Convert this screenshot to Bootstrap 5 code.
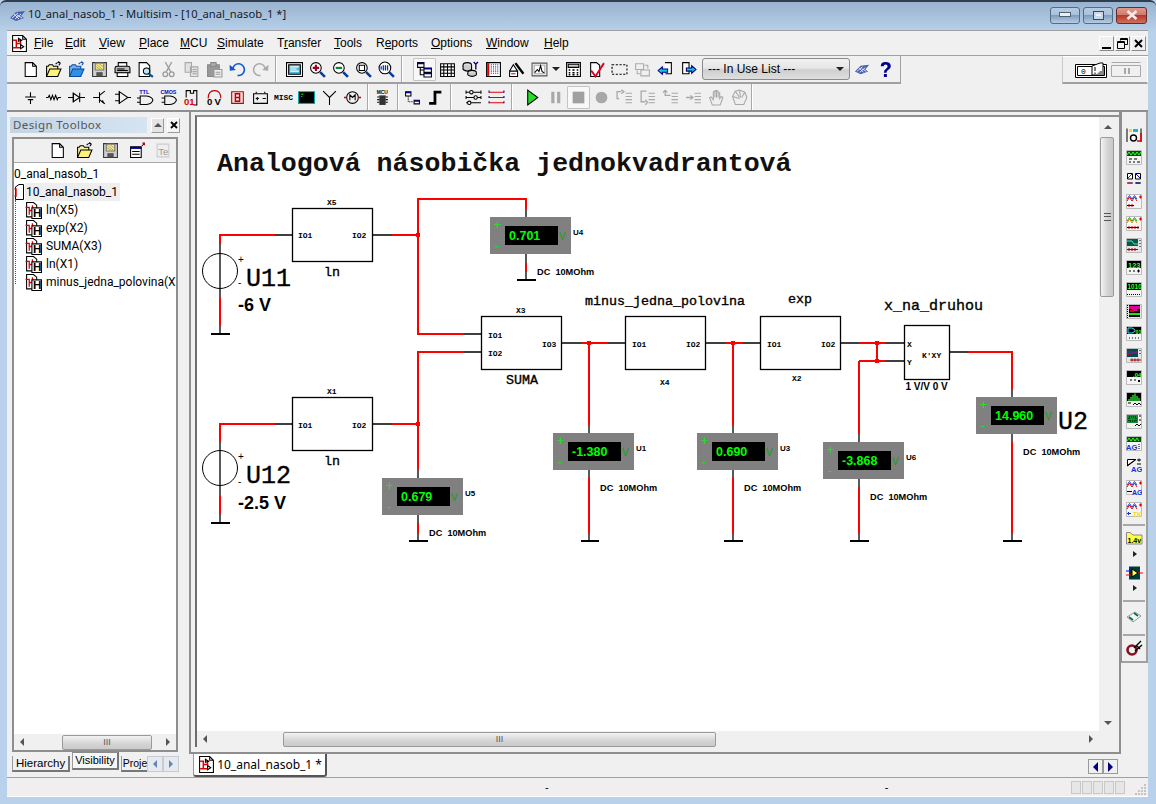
<!DOCTYPE html>
<html lang="en">
<head>
<meta charset="UTF-8">
<title>10_anal_nasob_1 - Multisim</title>
<link href="https://cdn.jsdelivr.net/npm/bootstrap@5.3.0/dist/css/bootstrap.min.css" rel="stylesheet">
<style>
  html, body { margin: 0; height: 804px; overflow: hidden; background: #b9d1ea; }
  body { font-family: "Liberation Sans", Arial, sans-serif; font-size: 12px; color: #000; line-height: 1; }
  .ms-win { width: 1156px; height: 804px; padding: 0 8px 7px 7px; border-top: 2px solid #2f3d4d; border-radius: 6px 6px 0 0; background: linear-gradient(#98b3d0 0, #b9d1ea 30px); }
  .ms-title { height: 28px; margin-left: -7px; margin-right: -8px; padding: 0 9px; }
  .ms-title-text { font-family: "Noto Sans", sans-serif; font-size: 11.2px; color: #15202c; margin-left: 1px; position: relative; top: -2px; }
  .ms-capbtn { width: 30px; height: 17px; margin-left: 3px; border: 1px solid #566a80; border-radius: 3px; background: linear-gradient(#b5cbe2 0, #a9c2dc 45%, #7f9dbd 50%, #b5cde5 100%); position: relative; top: -1px; }
  .ms-capbtn.cap-x { width: 31px; background: linear-gradient(#dd9a8c 0, #d07a6c 45%, #b8392a 50%, #d0705e 100%); border-color: #6b2a2a; color: #fff; }
  .ms-shell { height: 767px; background: #f0f0f0; border-top: 1px solid #a0a0a0; }
  .ms-menu { height: 24px; }
  .ms-menu-list { margin-left: 3px; }
  .ms-menu-item { padding: 0 3px; }
  .ms-menu-item u { text-underline-offset: 1px; }
  .mi-30 { width: 31px; } .mi-34 { width: 34px; } .mi-40 { width: 40px; } .mi-41 { width: 41px; } .mi-37 { width: 37px; }
  .mi-60 { width: 60px; } .mi-57 { width: 57px; } .mi-42 { width: 42px; } .mi-55 { width: 55px; } .mi-58 { width: 58px; }
  .ms-docbtns { margin-right: 2px; }
  .ms-docbtn { width: 15px; height: 15px; margin-left: 1px; background: #f0f0f0; border: 1px solid; border-color: #fff #8a8a8a #8a8a8a #fff; }
  .ms-rows { border-top: 1px solid #a0a0a0; }
  .ms-row1 { height: 28px; }
  .ms-row1-main { width: 894px; border-bottom: 2px solid #a0a0a0; border-right: 1px solid #a0a0a0; padding-left: 12px; }
  .ms-row1-side { width: 86px; margin-left: auto; padding-left: 5px; border: 1px solid #fff; border-bottom: 2px solid #a0a0a0; border-left-color: #c8c8c8; }
  .ms-row2 { height: 28px; padding-left: 12px; border-bottom: 2px solid #8f8f8f; }
  .ms-row2-end { width: 735px; }
  .ms-tb { width: 23px; height: 23px; flex: none; }
  .ms-tb.tb-on { background: #f8f8f8; border: 1px solid #c4c4c4; border-radius: 1px; }
  .ms-tb svg { width: 17px; height: 17px; }
  .ms-tb svg.tb-wide { width: 20px; }
  .ms-tb.tb-s { width: 15px; margin-left: -3px; }
  .tb-back1 { margin-left: -1px; }
  .tb-gap6 { margin-left: 6px; }
  .tb-misc { font: 700 8px "Liberation Mono", monospace; }
  .ms-sep { width: 1px; align-self: stretch; background: #a8a8a8; box-shadow: 1px 0 0 #fff; margin: 0 3px; flex: none; }
  .ms-combo { width: 148px; height: 22px; border: 1px solid #8a8a8a; border-radius: 3px; background: linear-gradient(#f2f2f2 0, #e6e6e6 45%, #cfcfcf 55%, #dedede 100%); margin: 0 1px 0 2px; padding: 0 5px; font-size: 12px; }
  .ms-arrow-d { width: 0; height: 0; border: 4px solid transparent; border-top: 4px solid #222; border-bottom: 0; }
  .ms-main { height: 665px; }
  .ms-left { width: 176px; padding-top: 4px; }
  .ms-left-head { height: 18px; padding-left: 3px; color: #555; }
  .ms-left-title { width: 137px; height: 16px; background: linear-gradient(90deg, #c2d4e6, #d6e4f2); padding-left: 3px; letter-spacing: .4px; line-height: 16px; font-family: "Noto Sans", sans-serif; font-size: 11.5px; }
  .ms-smallbtn { width: 13px; height: 15px; margin-left: 4px; border: 1px solid; border-color: #fff #9a9a9a #9a9a9a #fff; background: #e4e4e4; }
  .ms-smallbtn.btn-light-x { margin-left: 3px; background: #f4f4f4; }
  .ms-left-box { width: 166px; height: 615px; margin: 3px 0 0 5px; border: 2px solid #8e8e8e; }
  .ms-left-tools { height: 24px; padding-left: 35px; gap: 9.5px; border-bottom: 1px solid #a8a8a8; }
  .ms-left-tools svg { width: 17px; height: 17px; }
  .ms-tree { flex: 1; background: #fff; overflow: hidden; padding-top: 2px; position: relative; font-family: Roboto, sans-serif; }
  .ms-tree-row { height: 18px; white-space: nowrap; font-size: 12px; }
  .ms-tree-sel { background: #eeeeee; padding: 0 2px 0 1px; height: 18px; }
  .ms-tree-doc { flex: none; }
  .ms-tree-child { padding-left: 11px; }
  .ms-tree-child svg { width: 17px; height: 17px; margin-right: 4px; flex: none; }
  .ms-tree-dots { position: absolute; left: 1px; top: 37px; width: 9px; height: 84px; border-left: 1px dotted #555; }
  .ms-hbar { height: 16px; background: #f0f0f0; flex: none; }
  .ms-hthumb { height: 15px; border: 1px solid #9a9a9a; border-radius: 2px; background: linear-gradient(#f2f2f2, #d4d4d4 60%, #cacaca); font-size: 9px; color: #555; }
  .ms-hthumb.th-left { width: 90px; margin-left: 32px; }
  .ms-hthumb.th-main { width: 433px; margin-left: 70px; }
  .ms-sarrow { width: 16px; height: 16px; flex: none; }
  .ms-sarrow.sa-end { margin-left: auto; margin-right: 20px; }
  .ms-tri-l { width: 0; height: 0; border: 4px solid transparent; border-right: 4px solid #555; border-left: 0; }
  .ms-tri-r { width: 0; height: 0; border: 4px solid transparent; border-left: 4px solid #555; border-right: 0; }
  .ms-tri-u { width: 0; height: 0; border: 4px solid transparent; border-bottom: 4px solid #555; border-top: 0; }
  .ms-tri-d { width: 0; height: 0; border: 4px solid transparent; border-top: 4px solid #555; border-bottom: 0; }
  .ms-ltabs { height: 24px; margin-left: 5px; position: relative; }
  .ms-ltab { height: 16px; margin-top: 4px; border: 1px solid #9a9a9a; border-top: 0; border-right: 2px solid #777; border-bottom: 2px solid #777; padding: 0 3px; line-height: 14px; overflow: hidden; font-size: 11.5px; white-space: nowrap; }
  .ms-ltab.tab-on { margin-top: 0; height: 18px; border-top: 1px solid #8a8a8a; line-height: 15px; background: #f6f6f6; margin-left: 2px; margin-right: 2px; padding: 0 2px; font-size: 11px; }
  .ms-ltab.tab-cut { border-right: 0; padding: 0 0 0 1px; font-size: 10.5px; width: 27px; }
  .ms-larrows { position: absolute; left: 135px; top: 4px; width: 32px; height: 16px; }
  .ms-larrows > span { width: 16px; height: 16px; background: #e4eaf0; border: 1px solid #c8ccd2; }
  .ms-larrows .ms-tri-l { border-right-color: #6a84b0; }
  .ms-larrows .ms-tri-r { border-left-color: #6a84b0; }
  .ms-sash { width: 7px; }
  .ms-center { width: 932px; }
  .ms-canvas-frame { height: 642px; border: 2px solid #8e8e8e; border-top: 0; padding: 3px 0 5px 4px; background: #f0f0f0; }
  .ms-canvas-in { height: 100%; border-top: 2px solid #8e8e8e; border-left: 2px solid #6e6e6e; }
  .ms-canvas-body { min-height: 0; }
  .ms-sheet { flex: 1; background: #fff; overflow: hidden; }
  .ms-sheet svg { display: block; }
  .ms-vbar { width: 20px; padding: 2px 0 0 1px; background: #f0f0f0; }
  .ms-vthumb { width: 14px; height: 160px; margin-top: 2px; border: 1px solid #9a9a9a; border-radius: 2px; background: linear-gradient(90deg, #f2f2f2, #d2d2d2 60%, #c8c8c8); }
  .ms-grip-v { width: 7px; height: 8px; border-top: 1px solid #555; border-bottom: 1px solid #555; position: relative; }
  .ms-grip-v::after { content: ""; position: absolute; left: 0; right: 0; top: 2px; height: 1px; background: #555; }
  .ms-dtabs { height: 23px; }
  .ms-dtab { width: 134px; height: 23px; margin-left: 4px; border-left: 1px solid #9a9a9a; border-right: 2px solid #555; border-bottom: 2px solid #555; border-radius: 0 0 3px 3px; background: #fff; padding-left: 4px; font-size: 12px; font-family: "Noto Sans", sans-serif; white-space: nowrap; }
  .ms-dtab svg { width: 17px; height: 17px; margin-right: 2px; flex: none; }
  .ms-darrs { margin-top: 5px; margin-right: 3px; }
  .ms-darr { width: 15px; height: 15px; border: 1px solid #9a9a9a; background: #f0f0f0; }
  .ms-navy-l { width: 0; height: 0; border: 5px solid transparent; border-right: 5px solid #000080; border-left: 0; }
  .ms-navy-r { width: 0; height: 0; border: 5px solid transparent; border-left: 5px solid #000080; border-right: 0; }
  .ms-right { width: 27px; height: 551px; padding-top: 12px; border-left: 1px solid #8e8e8e; border-right: 2px solid #a0a0a0; border-bottom: 2px solid #a0a0a0; }
  .ms-inst { height: 22px; flex: none; }
  .ms-inst svg { width: 16px; height: 15px; display: block; }
  .ms-rsep { height: 2px; width: 22px; background: #a8a8a8; flex: none; }
  .rs-a { margin: 4px 0 6px; } .rs-b { margin: 9px 0 9px; } .rs-c { margin: 11px 0 4px; }
  .ms-tiny-arr { width: 0; height: 0; border: 3px solid transparent; border-left: 4px solid #222; border-right: 0; flex: none; margin-left: 2px; }
  .ta-a { margin-top: 6px; margin-bottom: 9px; } .ta-b { margin-top: 5px; }
  .ms-status { height: 20px; border-top: 1px solid #a0a0a0; background: #f0eeee; font-size: 11px; border-bottom: 1px solid #fff; }
  .st-a { margin-left: 538px; } .st-b { margin-left: 336px; }
  .ms-stat-segs { margin-right: 6px; }
  .ms-stat-seg { width: 10px; height: 13px; background: #e6e6e6; border: 1px solid #c8c8c8; margin-right: 1px; }
  .ms-stat-grip { margin-right: 1px; align-self: flex-end; }
  .sch-txt { font-family: "Liberation Mono", monospace; }
  .sch-thick { stroke: #000; stroke-width: .35px; }
  .sch-lbl { font-family: "Liberation Sans", sans-serif; font-weight: 700; }
  .sch-io { font-family: "Liberation Mono", monospace; font-size: 8px; font-weight: 700; }
  .sch-read { font-family: "Liberation Sans", sans-serif; font-weight: 700; font-size: 12.5px; fill: #00ff00; }
  .sch-sign { font-family: "Liberation Sans", sans-serif; font-size: 12px; fill: #20e020; }
  .sch-volt { font-family: "Liberation Sans", sans-serif; font-size: 10px; fill: #12a012; }
  .sch-dc { font-family: "Liberation Sans", sans-serif; font-weight: 700; font-size: 9.2px; white-space: pre; }
  .sch-un { font-family: "Liberation Sans", sans-serif; font-weight: 700; font-size: 8px; }
</style>
</head>
<body>

<svg width="0" height="0" class="position-absolute">
  <defs>
    <symbol id="i-logo" viewBox="0 0 18 14"><path d="M1 9 L7 3 L16 2 L12 7 L15 9 L7 12 Z" fill="#4a5fb0"/><path d="M3 9 L9 4 M6 10 L12 5 M8 6 L13 9 M5 5 L10 10" stroke="#dfe6ff" stroke-width="1"/></symbol>
    <symbol id="i-doc" viewBox="0 0 16 16"><path d="M3 1.5 H10 L13.5 5 V14.5 H3 Z M10 1.5 V5 H13.5" fill="#fff" stroke="#000"/></symbol>
    <symbol id="i-sch" viewBox="0 0 16 16"><path d="M1.5 .5 H11 L14.5 4 V15.5 H1.5 Z M11 .5 V4 H14.5" fill="#fff" stroke="#000"/><path d="M2 5 H5 V12 H2 M5 8 H9 V4 M9 12 H5" fill="none" stroke="#e00000" stroke-width="1.4"/><path d="M9 9 L12 11 L9 13 Z M7 3 L10 5 L7 6 Z" fill="none" stroke="#000"/></symbol>
    <symbol id="i-open" viewBox="0 0 16 16"><path d="M1.5 14.5 V5 H3 L4 3.5 H7 L8 5 H12 V7.5" fill="#f7f0a0" stroke="#000"/><path d="M1.5 14.5 H12 L15 7.5 H4.5 Z" fill="#fff27a" stroke="#000"/><path d="M10 3 Q12 .5 14.5 2 M14.5 2 L12.5 .5 M14.5 2 L13 4" fill="none" stroke="#000"/></symbol>
    <symbol id="i-open2" viewBox="0 0 16 16"><path d="M1.5 14.5 V5 H3 L4 3.5 H7 L8 5 H12 V7.5" fill="#6fb0f0" stroke="#0a4aa0"/><path d="M1.5 14.5 H12 L15 7.5 H4.5 Z" fill="#2f8fe6" stroke="#0a4aa0"/><path d="M10 3 Q12 .5 14.5 2 M14.5 2 L12.5 .5 M14.5 2 L13 4" fill="none" stroke="#0a4aa0"/></symbol>
    <symbol id="i-save" viewBox="0 0 16 16"><path d="M1.5 1.5 H14.5 V14.5 H1.5 Z" fill="#d0d0d0" stroke="#333"/><path d="M4 2 H12 V8.5 H4 Z" fill="#ffee66" stroke="#777"/><path d="M5 10.5 H11 V14.5 H5 Z" fill="#555"/><path d="M5 3 L11 8 M7 2 L12 6 M4 5 L9 8" stroke="#999" stroke-width=".8"/></symbol>
    <symbol id="i-print" viewBox="0 0 16 16"><path d="M4 5 V1.5 H12 V5" fill="#fff" stroke="#000"/><path d="M1 6.5 Q1 5 3 5 H13 Q15 5 15 6.5 V11 H1 Z" fill="#bbb" stroke="#000"/><path d="M3 11 H13 V14.5 H3 Z" fill="#fff" stroke="#000"/><path d="M3 7.5 H10 M3 9 H13" stroke="#000"/></symbol>
    <symbol id="i-prev" viewBox="0 0 16 16"><path d="M2 1.5 H9 L12 4.5 V14.5 H2 Z" fill="#fff" stroke="#000"/><circle cx="9" cy="9.5" r="3" fill="#bfe6f5" stroke="#000"/><path d="M11 12 L15 15" stroke="#00558a" stroke-width="2"/></symbol>
    <symbol id="i-cut" viewBox="0 0 16 16"><path d="M5 1 L10 10 M11 1 L6 10" stroke="#999" stroke-width="1.2"/><circle cx="5" cy="12.5" r="2.2" fill="none" stroke="#999" stroke-width="1.2"/><circle cx="11" cy="12.5" r="2.2" fill="none" stroke="#999" stroke-width="1.2"/></symbol>
    <symbol id="i-copy" viewBox="0 0 16 16"><path d="M2 1.5 H8 V10.5 H2 Z M7 5.5 H14 V14.5 H7 Z" fill="#e2e2e2" stroke="#a8a8a8"/><path d="M9 8 H13 M9 10 H13 M9 12 H13" stroke="#a8a8a8"/></symbol>
    <symbol id="i-paste" viewBox="0 0 16 16"><path d="M1.5 3.5 H12.5 V14.5 H1.5 Z" fill="#999" stroke="#888"/><path d="M4.5 1.5 H9.5 V5 H4.5 Z" fill="#b0b0b0" stroke="#888"/><path d="M7.5 8 H15 V15 H7.5 Z" fill="#eee" stroke="#999"/><path d="M9 10.5 H13.5 M9 12.5 H13.5" stroke="#999"/></symbol>
    <symbol id="i-undo" viewBox="0 0 16 16"><path d="M3.5 8 A5.5 5.5 0 1 1 8 13.5" fill="none" stroke="#1454d0" stroke-width="1.5"/><path d="M.5 3.5 L6.5 8.5 L.8 9.2 Z" fill="#1454d0"/></symbol>
    <symbol id="i-redo" viewBox="0 0 16 16"><path d="M12.5 8 A5.5 5.5 0 1 0 8 13.5" fill="none" stroke="#aaa" stroke-width="1.5"/><path d="M15.5 3.5 L9.5 8.5 L15.2 9.2 Z" fill="#aaa"/></symbol>
    <symbol id="i-sheet" viewBox="0 0 16 16"><path d="M.5 1.5 H15.5 V14.5 H.5 Z" fill="#fff" stroke="#000"/><path d="M2.5 3.5 H13.5 V12.5 H2.5 Z" fill="#4fb8d8" stroke="#000"/><path d="M4 5.5 H12 M4 7.5 H10 M4 9.5 H12" stroke="#fff"/></symbol>
    <symbol id="i-zin" viewBox="0 0 16 16"><circle cx="6.5" cy="6.5" r="5" fill="#fff" stroke="#000"/><path d="M3.5 6.5 H9.5 M6.5 3.5 V9.5" stroke="#a00020" stroke-width="2"/><path d="M10.5 10.5 L15 15" stroke="#0a3aa0" stroke-width="2.4"/></symbol>
    <symbol id="i-zout" viewBox="0 0 16 16"><circle cx="6.5" cy="6.5" r="5" fill="#fff" stroke="#000"/><path d="M3.5 6.5 H9.5" stroke="#008a20" stroke-width="2"/><path d="M10.5 10.5 L15 15" stroke="#0a3aa0" stroke-width="2.4"/></symbol>
    <symbol id="i-zarea" viewBox="0 0 16 16"><circle cx="6.5" cy="6.5" r="5" fill="#fff" stroke="#000"/><path d="M4 4 H9 V9 H4 Z" fill="none" stroke="#000"/><path d="M10.5 10.5 L15 15" stroke="#0a3aa0" stroke-width="2.4"/></symbol>
    <symbol id="i-zfit" viewBox="0 0 16 16"><circle cx="6.5" cy="6.5" r="5.5" fill="#fff" stroke="#000"/><path d="M3 5 V8 M5 4 V9 M7 4 V9 M9 4 V9" stroke="#1030a0" stroke-width="1.2"/><path d="M10.5 10.5 L15 15" stroke="#0a3aa0" stroke-width="2.4"/></symbol>
    <symbol id="i-hier" viewBox="0 0 16 16"><path d="M1.5 1.5 H7.5 V6 H1.5 Z M7.5 6.5 H14.5 V10.5 H7.5 Z M7.5 11 H14.5 V15 H7.5 Z" fill="#fff" stroke="#000"/><path d="M1.5 1.5 H7.5 V3 H1.5 Z M7.5 6.5 H14.5 V8 H7.5 Z M7.5 11 H14.5 V12.5 H7.5 Z" fill="#000080"/><path d="M4 6 V13 H7.5 M4 8.5 H7.5" fill="none" stroke="#000"/></symbol>
    <symbol id="i-grid" viewBox="0 0 16 16"><path d="M1.5 2.5 H14.5 V14.5 H1.5 Z M1.5 5.5 H14.5 M1.5 8.5 H14.5 M1.5 11.5 H14.5 M4.5 2.5 V14.5 M8 2.5 V14.5 M11.5 2.5 V14.5" fill="#fff" stroke="#000"/></symbol>
    <symbol id="i-db" viewBox="0 0 16 16"><ellipse cx="5" cy="4" rx="4" ry="2.5" fill="#ddd" stroke="#000"/><path d="M1 4 V8 Q5 11 9 8 V4" fill="#ccc" stroke="#000"/><ellipse cx="9.5" cy="11" rx="4" ry="2.2" fill="#ddd" stroke="#000"/><path d="M5.5 11 V13 Q9.5 16 13.5 13 V11" fill="#ccc" stroke="#000"/><path d="M11 1 L13 3 L15 1 M13 3 V8" fill="none" stroke="#000080" stroke-width="1.3"/></symbol>
    <symbol id="i-list" viewBox="0 0 16 16"><path d="M1.5 1.5 H14.5 V14.5 H1.5 Z" fill="#fff" stroke="#000"/><path d="M3 2 V14" stroke="#e00000" stroke-width="2"/><path d="M6 3 V13 M8 3 V13 M10 3 V13 M12 3 V13" stroke="#2040a0" stroke-dasharray="1 1"/></symbol>
    <symbol id="i-post" viewBox="0 0 16 16"><path d="M1.5 9.5 H9 V14.5 H1.5 Z M1.5 9.5 L5 3.5 L9 9.5" fill="#fff" stroke="#000"/><path d="M7 2 L14.5 12" stroke="#000" stroke-width="2.2"/><path d="M3 12 H7" stroke="#e00000"/></symbol>
    <symbol id="i-graph" viewBox="0 0 16 16"><path d="M1 2 H15 V14 H1 Z" fill="#f0f0f0" stroke="#555" stroke-width="1"/><path d="M3 4 H13 V12 H3 Z" fill="#fff" stroke="#aaa"/><path d="M3.5 11 L6 8 L7.5 10 L9 4.5 L10.5 10 L12.5 11" fill="none" stroke="#000"/></symbol>
    <symbol id="i-calc" viewBox="0 0 16 16"><path d="M1.5 1.5 H14.5 V14.5 H1.5 Z" fill="#fff" stroke="#000"/><path d="M3 3 H13 V6 H3 Z" fill="#ccc" stroke="#000"/><path d="M3.5 8.5 H5 M7 8.5 H9 M11 8.5 H12.5 M3.5 11 H5 M7 11 H9 M11 11 H12.5 M3.5 13 H5 M7 13 H9 M11 13 H12.5" stroke="#000" stroke-width="1.4"/></symbol>
    <symbol id="i-check" viewBox="0 0 16 16"><path d="M2.5 1.5 H8 L11 4 V14.5 H2.5 Z" fill="#fff" stroke="#000"/><path d="M3 9 L7 14.5 L15 2" fill="none" stroke="#e00020" stroke-width="1.8"/></symbol>
    <symbol id="i-dash" viewBox="0 0 16 16"><path d="M1 3.5 H15 V12.5 H1 Z" fill="none" stroke="#000" stroke-dasharray="2 1.5"/></symbol>
    <symbol id="i-xfer" viewBox="0 0 16 16"><path d="M1.5 2.5 H9 V8 H1.5 Z M6.5 8.5 H14.5 V14 H6.5 Z" fill="none" stroke="#aaa"/><path d="M10 4 H13 V7 M6 12 H3 V9" fill="none" stroke="#aaa"/></symbol>
    <symbol id="i-bkl" viewBox="0 0 16 16"><path d="M7.5 1.5 H13.5 V12 H8" fill="#fff" stroke="#000"/><path d="M1 9 L5 5.5 V7.5 H10 V10.5 H5 V12.5 Z" fill="#10c8d8" stroke="#000080"/></symbol>
    <symbol id="i-bkr" viewBox="0 0 16 16"><path d="M2.5 1.5 H8.5 V12 H2.5 Z" fill="#fff" stroke="#000"/><path d="M15 8 L11 4.5 V6.5 H6 V9.5 H11 V11.5 Z" fill="#10c8d8" stroke="#000080"/></symbol>
    <symbol id="i-help" viewBox="0 0 16 16"><path d="M3.5 5 Q3.5 1 8 1 Q13 1 13 5 Q13 7 10.5 8.5 Q9 9.3 9 11 H6.5 Q6.5 8.5 8.5 7.3 Q10 6.3 10 5 Q10 3.2 8 3.2 Q6.3 3.2 6.3 5 Z M6.5 12.3 H9.3 V15 H6.5 Z" fill="#000090"/></symbol>
    <symbol id="i-src" viewBox="0 0 16 16"><path d="M8 3 V7 M3 7.5 H13 M5.5 10 H10.5 M8 10 V14" stroke="#000" fill="none"/></symbol>
    <symbol id="i-res" viewBox="0 0 16 16"><path d="M1 8 H3 L4 6 L5.5 10 L7 6 L8.5 10 L10 6 L11.5 10 L12.5 8 H15" fill="none" stroke="#000"/></symbol>
    <symbol id="i-dio" viewBox="0 0 16 16"><path d="M0 8 H5 M11 8 H16 M11 3.5 V12.5 M5 3.5 V12.5" stroke="#000" fill="none"/><path d="M5 4 L11 8 L5 12 Z" fill="none" stroke="#000"/></symbol>
    <symbol id="i-bjt" viewBox="0 0 16 16"><path d="M2 8 H8 M8 3 V13 M8 6 L13 2 M8 10 L13 14" stroke="#000" fill="none"/><path d="M10 12 L13 14 L11 10 Z" fill="#000"/></symbol>
    <symbol id="i-amp" viewBox="0 0 16 16"><path d="M5 2.5 L13 8 L5 13.5 Z" fill="none" stroke="#000"/><path d="M1 5 H5 M1 11 H5 M13 8 H16 M5 2 V14" stroke="#000" fill="none"/></symbol>
    <symbol id="i-ttl" viewBox="0 0 16 16"><path d="M3 6.5 H9 Q14 7 15 10.5 Q14 14 9 14.5 H3 Z" fill="none" stroke="#000"/><path d="M0 8.5 H3 M0 12.5 H3" stroke="#000"/><text x="2" y="5" font-family="Liberation Sans" font-weight="700" font-size="5.4" fill="#0000c0">TTL</text></symbol>
    <symbol id="i-cmos" viewBox="0 0 18 16"><path d="M5 6.5 H10 Q15 7 16 10.5 Q15 14 10 14.5 H5 Z" fill="none" stroke="#000"/><path d="M2 8.5 H5 M2 12.5 H5" stroke="#000"/><text x="1" y="5" font-family="Liberation Sans" font-weight="700" font-size="5" fill="#0000c0">CMOS</text></symbol>
    <symbol id="i-01" viewBox="0 0 16 16"><path d="M3 8 V1.5 H7 V4 H10 V1.5 H13 V15 H10" fill="none" stroke="#000"/><text x="1" y="15" font-family="Liberation Sans" font-weight="700" font-size="9" fill="#e00000">01</text></symbol>
    <symbol id="i-mix" viewBox="0 0 16 16"><path d="M2 9 Q2 1.5 8 1.5 Q14 1.5 14 9" fill="none" stroke="#c00000"/><text x="1" y="15" font-family="Liberation Sans" font-weight="700" font-size="9">0</text><text x="8" y="15" font-family="Liberation Sans" font-weight="700" font-size="9">V</text></symbol>
    <symbol id="i-ind" viewBox="0 0 16 16"><path d="M2.5 2.5 H13.5 V13.5 H2.5 Z" fill="#f8dcdc" stroke="#c00000"/><path d="M6 4.5 H10 V11.5 H6 Z M6 8 H10" fill="none" stroke="#c00000" stroke-width="1.3"/></symbol>
    <symbol id="i-pwr" viewBox="0 0 16 16"><path d="M1.5 4.5 H14.5 V13.5 H1.5 Z" fill="none" stroke="#000"/><path d="M4 4 V2.5 M12 4 V2.5 M3.5 9 H6.5 M5 7.5 V10.5 M10 9 H13" stroke="#000"/></symbol>
    <symbol id="i-adv" viewBox="0 0 16 16"><path d="M.5 2.5 H15.5 V13.5 H.5 Z" fill="#003a2a" stroke="#0aa"/><path d="M1 3 H15 V13 H1 Z" fill="#000"/><path d="M3 5 H5 M3 7 H4" stroke="#0f0"/></symbol>
    <symbol id="i-ant" viewBox="0 0 16 16"><path d="M2 2 L8 8 L14 2 M8 8 V15" fill="none" stroke="#000"/></symbol>
    <symbol id="i-mot" viewBox="0 0 16 16"><circle cx="8" cy="8" r="5.5" fill="none" stroke="#000"/><path d="M0 8 H2.5 M13.5 8 H16" stroke="#c00000" stroke-width="1.5"/><path d="M5.5 10.5 V5.5 L8 8 L10.5 5.5 V10.5" fill="none" stroke="#000"/></symbol>
    <symbol id="i-mcu" viewBox="0 0 16 16"><text x="2.5" y="4.5" font-family="Liberation Sans" font-weight="700" font-size="4.6">MCU</text><path d="M5 6 H11 V15 H5 Z" fill="#333"/><path d="M3 7.5 H5 M3 10 H5 M3 12.5 H5 M11 7.5 H13 M11 10 H13 M11 12.5 H13" stroke="#000"/></symbol>
    <symbol id="i-hbb" viewBox="0 0 16 16"><path d="M1.5 2.5 H6.5 V6.5 H1.5 Z M9.5 10.5 H14.5 V14 H9.5 Z" fill="#fff" stroke="#000"/><path d="M1.5 2.5 H6.5 V4 H1.5 Z M9.5 10.5 H14.5 V12 H9.5 Z" fill="#000080"/><path d="M4 7 V12 H9" fill="none" stroke="#000" stroke-dasharray="1 1"/></symbol>
    <symbol id="i-bus" viewBox="0 0 16 16"><path d="M2 13.5 H7.5 V3 H13.5" fill="none" stroke="#000" stroke-width="2.6"/></symbol>
    <symbol id="i-net1" viewBox="0 0 16 16"><path d="M1 3 H15 M1 8 H15 M1 13 H15" stroke="#000"/><path d="M1 1.5 V4.5 M15 1.5 V4.5 M1 6.5 V9.5 M15 6.5 V9.5" stroke="#000"/><circle cx="4" cy="13" r="1.6" fill="#fff" stroke="#000"/><circle cx="10" cy="8" r="1.6" fill="#fff" stroke="#000"/><circle cx="6" cy="3" r="1.6" fill="#fff" stroke="#000"/></symbol>
    <symbol id="i-net2" viewBox="0 0 16 16"><path d="M1 3 H15 M1 8 H15 M1 13 H15" stroke="#e00000"/><path d="M1 1.5 V14.5 M15 1.5 V14.5" stroke="#000080" stroke-dasharray="2 3"/></symbol>
    <symbol id="i-run" viewBox="0 0 16 16"><path d="M3.5 1 L13 8 L3.5 15 Z" fill="#22dd22" stroke="#000"/></symbol>
    <symbol id="i-pause" viewBox="0 0 16 16"><path d="M4 2.5 H7 V13.5 H4 Z M9.5 2.5 H12.5 V13.5 H9.5 Z" fill="#a8a8a8"/></symbol>
    <symbol id="i-stop" viewBox="0 0 16 16"><path d="M2.5 2.5 H13.5 V13.5 H2.5 Z" fill="#a0a0a0"/></symbol>
    <symbol id="i-rec" viewBox="0 0 16 16"><circle cx="8" cy="8" r="5.5" fill="#a8a8a8"/></symbol>
    <symbol id="i-st1" viewBox="0 0 16 16"><path d="M1 6 V2.5 H5 M5 .8 L7.5 2.5 L5 4.5 M3 9 H1 V6" fill="none" stroke="#a8a8a8" stroke-width="1.2"/><path d="M9 4 H15 M9 7 H15 M9 10 H15 M9 13 H15" stroke="#a8a8a8"/></symbol>
    <symbol id="i-st2" viewBox="0 0 16 16"><path d="M7 2 H2 V12 H6 M6 10 L8 12.5 L6 15" fill="none" stroke="#a8a8a8" stroke-width="1.2"/><path d="M9 4 H15 M9 7 H15 M9 10 H15 M9 13 H15" stroke="#a8a8a8"/></symbol>
    <symbol id="i-st3" viewBox="0 0 16 16"><path d="M3 1 L1 3.5 M3 1 L5 3.5 M3 1 V6 H8" fill="none" stroke="#a8a8a8" stroke-width="1.2"/><path d="M9 4 H15 M9 7 H15 M9 10 H15 M9 13 H15" stroke="#a8a8a8"/></symbol>
    <symbol id="i-st4" viewBox="0 0 16 16"><path d="M1 8 H7 M5 6 L7.5 8 L5 10" fill="none" stroke="#a8a8a8" stroke-width="1.2"/><path d="M9 4 H15 M9 7 H15 M9 10 H15 M9 13 H15" stroke="#a8a8a8"/></symbol>
    <symbol id="i-hand" viewBox="0 0 16 16"><path d="M4 15 L1.5 8 L3 7.5 L5 10 V2.5 H6.5 V8 V1.5 H8 V8 V2 H9.5 V8 V3.5 H11 V9 L12.5 7 L14 8 L11.5 15 Z" fill="#eee" stroke="#a8a8a8"/></symbol>
    <symbol id="i-hand2" viewBox="0 0 16 16"><path d="M4 14.5 L1.5 7 L4 2 L8 1 L13 3 L15 8 L12 14.5 Z" fill="#eee" stroke="#a8a8a8"/><path d="M4 2 L8 8 M8 1 L9 8 M13 3 L10 8 M1.5 7 L8 9" stroke="#a8a8a8"/></symbol>
    <symbol id="i-tview" viewBox="0 0 16 16"><path d="M2 2 H13 V14 H2 Z" fill="#eee" stroke="#ccc"/><text x="3" y="12" font-family="Liberation Sans" font-size="9" fill="#999">Te</text></symbol>
    <symbol id="i-prop" viewBox="0 0 16 16"><path d="M1.5 4.5 H11.5 V14.5 H1.5 Z" fill="#fff" stroke="#000"/><path d="M1.5 4.5 H11.5 V6.5 H1.5 Z" fill="#000080"/><path d="M3 9 H10 M3 11.5 H10" stroke="#000"/><path d="M12 4 L14.5 1 M12.5 1 H14.5 V3" stroke="#a00000" fill="none"/></symbol>
    <symbol id="i-hb" viewBox="0 0 16 16"><path d="M1.5 .5 H8 L11 3 V14 H1.5 Z" fill="#fff" stroke="#000"/><path d="M.5 5 H4 V12 M4 8 H7 V3" fill="none" stroke="#e00000" stroke-width="1.2"/><path d="M6.5 5.5 H15.5 V15.5 H6.5 Z" fill="#fff" stroke="#000"/><text x="7.5" y="14.5" font-family="Liberation Sans" font-weight="700" font-size="11">H</text></symbol>

    <symbol id="r-dmm" viewBox="0 0 16 15"><path d="M1 1 H15 V14 H1 Z" fill="#f4f4f4"/><path d="M1 .5 V14 M15 .5 V14" stroke="#000"/><path d="M3 1 H6 V4 H3 Z" fill="#ffd800"/><path d="M7 1 H12 V4 H7 Z" fill="#10b8d8"/><path d="M15 5 V13 H11" fill="none" stroke="#e00000" stroke-width="1.5"/><circle cx="7.5" cy="10" r="3" fill="#fff" stroke="#000" stroke-width="1.4"/></symbol>
    <symbol id="r-fg" viewBox="0 0 16 15"><path d="M.5 .5 H15.5 V14.5 H.5 Z" fill="#f4f4f4" stroke="#bbb"/><path d="M1 1 H15 V6 H1 Z" fill="#0a4a0a"/><path d="M1 5 L3 2 L5 5 L7 2 L9 5 L11 2 L13 5 L15 2" fill="none" stroke="#30ff30"/><path d="M3 9 H6 M8 9 H11 M3 12 H5 M7 12 H9 M11 12 H14" stroke="#000"/></symbol>
    <symbol id="r-watt" viewBox="0 0 16 15"><path d="M1.5 1.5 H6.5 V7 H1.5 Z M9.5 1.5 H14.5 V7 H9.5 Z" fill="#fff" stroke="#000"/><path d="M2 6 L6 2" stroke="#e00000"/><path d="M10 2 L14 6" stroke="#0000e0"/><path d="M1 11 H7 M9 11 H15" stroke="#000080"/><path d="M3 10 V12 M5 10 V12" stroke="#e00000"/><path d="M11 10 V12 M13 10 V12" stroke="#000"/></symbol>
    <symbol id="r-sc2" viewBox="0 0 16 15"><path d="M.5 .5 H15.5 V14.5 H.5 Z" fill="#f4f4f4" stroke="#bbb"/><path d="M1 1.5 H12 V8 H1 Z" fill="#fff"/><path d="M1 7 L3.5 3 L6 7 L8.5 3 L11 7" fill="none" stroke="#e00000"/><path d="M1 5 L3.5 1.5 L6 5 L8.5 1.5 L11 5" fill="none" stroke="#2040d0"/><path d="M13 3 H16 M14.5 1.5 V4.5" stroke="#e00000" stroke-width="1.2"/><path d="M1 11.5 H8" stroke="#000" /><path d="M3 10 V13 M6 10 V13" stroke="#e00000"/></symbol>
    <symbol id="r-sc4" viewBox="0 0 16 15"><path d="M.5 .5 H15.5 V14.5 H.5 Z" fill="#f4f4f4" stroke="#bbb"/><path d="M1 1.5 H12 V8 H1 Z" fill="#fff"/><path d="M1 7 L3.5 3 L6 7 L8.5 3 L11 7" fill="none" stroke="#e08000"/><path d="M1 5 L3.5 1.5 L6 5 L8.5 1.5 L11 5" fill="none" stroke="#10a010"/><path d="M13 3 H16 M14.5 1.5 V4.5" stroke="#e00000" stroke-width="1.2"/><path d="M1 11.5 H13" stroke="#000" /><path d="M3 10 V13 M6 10 V13 M9 10 V13 M12 10 V13" stroke="#e00000"/></symbol>
    <symbol id="r-bode" viewBox="0 0 16 15"><path d="M.5 .5 H15.5 V14.5 H.5 Z" fill="#e4e4e4" stroke="#bbb"/><path d="M1 1 H12 V8 H1 Z" fill="#0a5a3a"/><path d="M1 3 H6 L8 6 H12" fill="none" stroke="#30e0ff"/><path d="M14 2 V3 M14 5 V6 M14 8 V9" stroke="#000"/><path d="M1 11.5 H12 M3 10 V13 M6 10 V13 M9 10 V13" stroke="#a00000"/></symbol>
    <symbol id="r-cnt" viewBox="0 0 16 15"><path d="M.5 .5 H15.5 V14.5 H.5 Z" fill="#f4f4f4" stroke="#bbb"/><path d="M1 1 H15 V8 H1 Z" fill="#000"/><text x="2" y="7.5" font-family="Liberation Sans" font-weight="700" font-size="7.5" fill="#30ff30">123</text><path d="M3 11 H5 M7 11 H9 M11 11 H14 M12.5 9.5 V12.5" stroke="#000"/></symbol>
    <symbol id="r-word" viewBox="0 0 16 15"><path d="M.5 .5 H15.5 V14.5 H.5 Z" fill="#f4f4f4" stroke="#bbb"/><path d="M1 1 H15 V8 H1 Z" fill="#000"/><text x="1.5" y="7" font-family="Liberation Sans" font-weight="700" font-size="6.4" fill="#30ff30">1010</text><path d="M1 12.5 H15" stroke="#000" stroke-dasharray="1 1"/></symbol>
    <symbol id="r-logic" viewBox="0 0 16 15"><path d="M.5 .5 H15.5 V14.5 H.5 Z" fill="#e4e4e4" stroke="#bbb"/><path d="M3 1 H14 V13 H3 Z" fill="#000"/><path d="M3 2 H14 V5 H11 V7 H6 V5 H3 Z" fill="#e000a0"/><path d="M4 7 H8" stroke="#e00000" stroke-width="2"/><path d="M3 10 H14" stroke="#20e020" stroke-width="2"/><path d="M1.5 1 V14" stroke="#000" stroke-dasharray="1 1"/></symbol>
    <symbol id="r-conv" viewBox="0 0 16 15"><path d="M.5 .5 H15.5 V14.5 H.5 Z" fill="#f4f4f4" stroke="#bbb"/><path d="M1 1 H15 V8 H1 Z" fill="#000"/><path d="M2 2 H6 Q9 3 9 4.5 Q9 6 6 7 H2 Z" fill="none" stroke="#30e0ff"/><text x="9.5" y="7.5" font-family="Liberation Sans" font-weight="700" font-size="5.4" fill="#30ff30">01</text><path d="M3 12 H13" stroke="#000" stroke-dasharray="1 2"/></symbol>
    <symbol id="r-iv" viewBox="0 0 16 15"><path d="M.5 .5 H15.5 V14.5 H.5 Z" fill="#e4e4e4" stroke="#bbb"/><path d="M1 1 H12 V9 H1 Z" fill="#004a50"/><path d="M1 3 L12 5 M1 7 L12 3" stroke="#e00000"/><path d="M1 5 H12" stroke="#2040e0"/><path d="M14 2 V3 M14 5 V6" stroke="#000"/><path d="M4 12 H15 M6 10.5 V13.5 M9 10.5 V13.5 M12 10.5 V13.5" stroke="#a00000"/></symbol>
    <symbol id="r-dist" viewBox="0 0 16 15"><path d="M.5 .5 H15.5 V14.5 H.5 Z" fill="#f4f4f4" stroke="#bbb"/><path d="M1 1 H15 V7 H1 Z" fill="#000"/><text x="7" y="7" font-family="Liberation Sans" font-weight="700" font-size="6" fill="#30ff30">.04</text><path d="M4 10 H6 M8 10 H10 M12 12 L14 10 M12 10 L14 12" stroke="#000"/></symbol>
    <symbol id="r-spec" viewBox="0 0 16 15"><path d="M.5 .5 H15.5 V14.5 H.5 Z" fill="#f4f4f4" stroke="#bbb"/><path d="M1 1 H15 V9 H1 Z" fill="#000"/><path d="M3 9 V7 M5 9 V5 M7 9 V3 M9 9 V1.5 M11 9 V4 M13 9 V6" stroke="#30ff30" stroke-width="1.2"/><path d="M2 11 H5 M7 13 L9 11 L11 13 L13 11 L15 13" fill="none" stroke="#000"/></symbol>
    <symbol id="r-net" viewBox="0 0 16 15"><path d="M.5 .5 H15.5 V14.5 H.5 Z" fill="#f4f4f4" stroke="#bbb"/><path d="M1 1 H12 V9 H1 Z" fill="#109030"/><path d="M3 3 H10 V7 H3 Z" fill="none" stroke="#000" stroke-dasharray="1 1"/><path d="M14 1 V3 M14 5 V7 M9 12 L11 10 L13 12 L15 10" fill="none" stroke="#000"/></symbol>
    <symbol id="r-agf" viewBox="0 0 16 15"><path d="M.5 .5 H15.5 V14.5 H.5 Z" fill="#f4f4f4" stroke="#bbb"/><path d="M1 1 H15 V6 H1 Z" fill="#0a4a0a"/><path d="M1 5 L3 2 L5 5 L7 2 L9 5 L11 2 L13 5" fill="none" stroke="#30ff30"/><text x="0" y="14" font-family="Liberation Sans" font-weight="700" font-size="7.6" fill="#1030e0">AG</text><path d="M13 8 V14" stroke="#000" stroke-dasharray="1 1"/></symbol>
    <symbol id="r-agm" viewBox="0 0 16 15"><path d="M1.5 1.5 H10 L1.5 8 Z" fill="#fff" stroke="#000"/><path d="M2 7 L9 2" stroke="#000"/><path d="M11 2 H15 M13 .5 V3.5 M11 6 H15" stroke="#000"/><text x="5" y="14" font-family="Liberation Sans" font-weight="700" font-size="7.6" fill="#1030e0">AG</text></symbol>
    <symbol id="r-ags" viewBox="0 0 16 15"><path d="M.5 .5 H15.5 V14.5 H.5 Z" fill="#f4f4f4" stroke="#bbb"/><path d="M1 1.5 H12 V7.5 H1 Z" fill="#fff"/><path d="M1 7 L3.5 3 L6 7 L8.5 3 L11 7" fill="none" stroke="#e00000"/><path d="M1 5 L3.5 1.5 L6 5 L8.5 1.5 L11 5" fill="none" stroke="#2040d0"/><path d="M13 3 H16 M14.5 1.5 V4.5" stroke="#e00000" stroke-width="1.2"/><text x="6" y="14.5" font-family="Liberation Sans" font-weight="700" font-size="7" fill="#1030e0">AG</text><path d="M1 11.5 H6" stroke="#000"/></symbol>
    <symbol id="r-tek" viewBox="0 0 16 15"><path d="M.5 .5 H15.5 V14.5 H.5 Z" fill="#f4f4f4" stroke="#bbb"/><path d="M1 1.5 H12 V7.5 H1 Z" fill="#fff"/><path d="M1 7 L3.5 3 L6 7 L8.5 3 L11 7" fill="none" stroke="#e00000"/><path d="M1 5 L3.5 1.5 L6 5 L8.5 1.5 L11 5" fill="none" stroke="#2040d0"/><path d="M13 3 H16 M14.5 1.5 V4.5" stroke="#e00000" stroke-width="1.2"/><text x="7" y="14.5" font-family="Liberation Sans" font-weight="700" font-size="6.6" fill="#f0e020">TK</text><path d="M1 11.5 H5 M2.5 10 V13" stroke="#1030e0"/></symbol>
  </defs>
</svg>

<div class="ms-win d-flex flex-column">
  <div class="ms-title d-flex align-items-center">
    <svg width="18" height="14"><use href="#i-logo"/></svg>
    <span class="ms-title-text">10_anal_nasob_1 - Multisim - [10_anal_nasob_1 *]</span>
    <div class="d-flex ms-auto">
      <div class="ms-capbtn d-flex align-items-center justify-content-center"><svg width="12" height="6"><rect x=".5" y=".5" width="11" height="4" fill="#e8eef5" stroke="#506070"/></svg></div>
      <div class="ms-capbtn d-flex align-items-center justify-content-center"><svg width="11" height="9"><rect x=".5" y=".5" width="10" height="8" fill="#c8d8e8" stroke="#3a4a5a"/><rect x="3" y="3" width="5" height="2" fill="#eef"/></svg></div>
      <div class="ms-capbtn cap-x d-flex align-items-center justify-content-center"><svg width="12" height="10"><path d="M1.5 1 L10.5 9 M10.5 1 L1.5 9" stroke="#f4ecec" stroke-width="2.6"/></svg></div>
    </div>
  </div>

  <div class="ms-shell d-flex flex-column">
    <div class="ms-menu d-flex align-items-center">
      <svg class="ms-1" width="17" height="17"><use href="#i-sch"/></svg>
      <div class="d-flex ms-menu-list">
        <span class="ms-menu-item mi-30"><u>F</u>ile</span>
        <span class="ms-menu-item mi-34"><u>E</u>dit</span>
        <span class="ms-menu-item mi-40"><u>V</u>iew</span>
        <span class="ms-menu-item mi-41"><u>P</u>lace</span>
        <span class="ms-menu-item mi-37"><u>M</u>CU</span>
        <span class="ms-menu-item mi-60"><u>S</u>imulate</span>
        <span class="ms-menu-item mi-57">T<u>r</u>ansfer</span>
        <span class="ms-menu-item mi-42"><u>T</u>ools</span>
        <span class="ms-menu-item mi-55">R<u>e</u>ports</span>
        <span class="ms-menu-item mi-55"><u>O</u>ptions</span>
        <span class="ms-menu-item mi-58"><u>W</u>indow</span>
        <span class="ms-menu-item"><u>H</u>elp</span>
      </div>
      <div class="d-flex ms-auto ms-docbtns">
        <div class="ms-docbtn d-flex align-items-end justify-content-center"><svg width="9" height="5"><rect y="2" width="9" height="2" fill="#000"/></svg></div>
        <div class="ms-docbtn d-flex align-items-center justify-content-center"><svg width="11" height="11"><path d="M3.5 2.5 V.5 H10.5 V6.5 H8 M.5 3.5 H7.5 V10.5 H.5 Z M.5 4.5 H7.5 M3.5 1.5 H10.5" fill="none" stroke="#000"/></svg></div>
        <div class="ms-docbtn d-flex align-items-center justify-content-center"><svg width="9" height="9"><path d="M1 1 L8 8 M8 1 L1 8" stroke="#000" stroke-width="2"/></svg></div>
      </div>
    </div>

    <div class="ms-rows">
      <div class="ms-row1 d-flex">
        <div class="ms-row1-main d-flex align-items-center">
          <span class="ms-tb d-flex align-items-center justify-content-center"><svg><use href="#i-doc"/></svg></span>
          <span class="ms-tb d-flex align-items-center justify-content-center"><svg><use href="#i-open"/></svg></span>
          <span class="ms-tb d-flex align-items-center justify-content-center"><svg><use href="#i-open2"/></svg></span>
          <span class="ms-tb d-flex align-items-center justify-content-center"><svg><use href="#i-save"/></svg></span>
          <span class="ms-tb d-flex align-items-center justify-content-center"><svg><use href="#i-print"/></svg></span>
          <span class="ms-tb d-flex align-items-center justify-content-center"><svg><use href="#i-prev"/></svg></span>
          <span class="ms-tb d-flex align-items-center justify-content-center"><svg><use href="#i-cut"/></svg></span>
          <span class="ms-tb d-flex align-items-center justify-content-center"><svg><use href="#i-copy"/></svg></span>
          <span class="ms-tb d-flex align-items-center justify-content-center"><svg><use href="#i-paste"/></svg></span>
          <span class="ms-tb d-flex align-items-center justify-content-center"><svg><use href="#i-undo"/></svg></span>
          <span class="ms-tb d-flex align-items-center justify-content-center"><svg><use href="#i-redo"/></svg></span>
          <span class="ms-sep"></span>
          <span class="ms-tb ms-1 d-flex align-items-center justify-content-center"><svg><use href="#i-sheet"/></svg></span>
          <span class="ms-tb d-flex align-items-center justify-content-center"><svg><use href="#i-zin"/></svg></span>
          <span class="ms-tb d-flex align-items-center justify-content-center"><svg><use href="#i-zout"/></svg></span>
          <span class="ms-tb d-flex align-items-center justify-content-center"><svg><use href="#i-zarea"/></svg></span>
          <span class="ms-tb d-flex align-items-center justify-content-center"><svg><use href="#i-zfit"/></svg></span>
          <span class="ms-sep"></span>
          <span class="ms-tb tb-on ms-2 d-flex align-items-center justify-content-center"><svg><use href="#i-hier"/></svg></span>
          <span class="ms-tb d-flex align-items-center justify-content-center"><svg><use href="#i-grid"/></svg></span>
          <span class="ms-tb d-flex align-items-center justify-content-center"><svg><use href="#i-db"/></svg></span>
          <span class="ms-tb d-flex align-items-center justify-content-center"><svg><use href="#i-list"/></svg></span>
          <span class="ms-tb d-flex align-items-center justify-content-center"><svg><use href="#i-post"/></svg></span>
          <span class="ms-tb d-flex align-items-center justify-content-center"><svg><use href="#i-graph"/></svg></span>
          <span class="ms-tb tb-s d-flex align-items-center justify-content-center"><span class="ms-arrow-d"></span></span>
          <span class="ms-tb tb-back1 d-flex align-items-center justify-content-center"><svg><use href="#i-calc"/></svg></span>
          <span class="ms-tb d-flex align-items-center justify-content-center"><svg><use href="#i-check"/></svg></span>
          <span class="ms-tb d-flex align-items-center justify-content-center"><svg><use href="#i-dash"/></svg></span>
          <span class="ms-tb d-flex align-items-center justify-content-center"><svg><use href="#i-xfer"/></svg></span>
          <span class="ms-tb d-flex align-items-center justify-content-center"><svg><use href="#i-bkl"/></svg></span>
          <span class="ms-tb d-flex align-items-center justify-content-center"><svg><use href="#i-bkr"/></svg></span>
          <div class="ms-combo d-flex align-items-center justify-content-between"><span>--- In Use List ---</span><span class="ms-arrow-d"></span></div>
          <span class="ms-tb d-flex align-items-center justify-content-center"><svg><use href="#i-logo"/></svg></span>
          <span class="ms-tb d-flex align-items-center justify-content-center"><svg><use href="#i-help"/></svg></span>
        </div>
        <div class="ms-row1-side d-flex align-items-center justify-content-center gap-1">
          <svg width="32" height="16" viewBox="0 0 32 16"><path d="M.5 2.5 H31.5 V15.5 H.5 Z" fill="#fff" stroke="#000"/><path d="M2.5 4.5 H29.5 V13.5 H2.5 Z" fill="#fff" stroke="#000"/><text x="6" y="12" font-family="Liberation Mono" font-size="8">0</text><path d="M17 4 L25 1 H28 V13 H17 Z" fill="#fff" stroke="#000"/><path d="M20 5 V9 M20 10.5 V12" stroke="#000"/><path d="M21 13 L25 9 H28 V13 Z" fill="#888"/></svg>
          <svg width="30" height="16" viewBox="0 0 30 16"><path d="M.5 .5 H29.5 M.5 3.5 H29.5 V14.5 H.5 Z" fill="#f0f0f0" stroke="#a8a8a8"/><path d="M14 6 V12 M18 6 V12" stroke="#a8a8a8" stroke-width="2"/></svg>
        </div>
      </div>
      <div class="ms-row2 d-flex">
        <div class="d-flex align-items-center ms-row2-end">
          <span class="ms-tb d-flex align-items-center justify-content-center"><svg><use href="#i-src"/></svg></span>
          <span class="ms-tb d-flex align-items-center justify-content-center"><svg><use href="#i-res"/></svg></span>
          <span class="ms-tb d-flex align-items-center justify-content-center"><svg><use href="#i-dio"/></svg></span>
          <span class="ms-tb d-flex align-items-center justify-content-center"><svg><use href="#i-bjt"/></svg></span>
          <span class="ms-tb d-flex align-items-center justify-content-center"><svg><use href="#i-amp"/></svg></span>
          <span class="ms-tb d-flex align-items-center justify-content-center"><svg><use href="#i-ttl"/></svg></span>
          <span class="ms-tb d-flex align-items-center justify-content-center"><svg class="tb-wide"><use href="#i-cmos"/></svg></span>
          <span class="ms-tb d-flex align-items-center justify-content-center"><svg><use href="#i-01"/></svg></span>
          <span class="ms-tb d-flex align-items-center justify-content-center"><svg><use href="#i-mix"/></svg></span>
          <span class="ms-tb d-flex align-items-center justify-content-center"><svg><use href="#i-ind"/></svg></span>
          <span class="ms-tb d-flex align-items-center justify-content-center"><svg><use href="#i-pwr"/></svg></span>
          <span class="ms-tb tb-misc d-flex align-items-center justify-content-center">MISC</span>
          <span class="ms-tb d-flex align-items-center justify-content-center"><svg><use href="#i-adv"/></svg></span>
          <span class="ms-tb d-flex align-items-center justify-content-center"><svg><use href="#i-ant"/></svg></span>
          <span class="ms-tb d-flex align-items-center justify-content-center"><svg><use href="#i-mot"/></svg></span>
          <span class="ms-sep"></span>
          <span class="ms-tb d-flex align-items-center justify-content-center"><svg><use href="#i-mcu"/></svg></span>
          <span class="ms-sep"></span>
          <span class="ms-tb d-flex align-items-center justify-content-center"><svg><use href="#i-hbb"/></svg></span>
          <span class="ms-tb d-flex align-items-center justify-content-center"><svg><use href="#i-bus"/></svg></span>
          <span class="ms-sep"></span>
          <span class="ms-tb ms-2 d-flex align-items-center justify-content-center"><svg><use href="#i-net1"/></svg></span>
          <span class="ms-tb d-flex align-items-center justify-content-center"><svg><use href="#i-net2"/></svg></span>
          <span class="ms-sep"></span>
          <span class="ms-tb tb-gap6 d-flex align-items-center justify-content-center"><svg><use href="#i-run"/></svg></span>
          <span class="ms-tb d-flex align-items-center justify-content-center"><svg><use href="#i-pause"/></svg></span>
          <span class="ms-tb tb-on d-flex align-items-center justify-content-center"><svg><use href="#i-stop"/></svg></span>
          <span class="ms-tb d-flex align-items-center justify-content-center"><svg><use href="#i-rec"/></svg></span>
          <span class="ms-tb d-flex align-items-center justify-content-center"><svg><use href="#i-st1"/></svg></span>
          <span class="ms-tb d-flex align-items-center justify-content-center"><svg><use href="#i-st2"/></svg></span>
          <span class="ms-tb d-flex align-items-center justify-content-center"><svg><use href="#i-st3"/></svg></span>
          <span class="ms-tb d-flex align-items-center justify-content-center"><svg><use href="#i-st4"/></svg></span>
          <span class="ms-tb d-flex align-items-center justify-content-center"><svg><use href="#i-hand"/></svg></span>
          <span class="ms-tb d-flex align-items-center justify-content-center"><svg><use href="#i-hand2"/></svg></span>
          <span class="ms-sep ms-auto"></span>
        </div>
      </div>
    </div>

    <div class="ms-main d-flex">
      <div class="ms-left">
        <div class="ms-left-head d-flex align-items-center">
          <div class="ms-left-title">Design Toolbox</div>
          <div class="ms-smallbtn d-flex align-items-center justify-content-center"><span class="ms-tri-u"></span></div>
          <div class="ms-smallbtn btn-light-x d-flex align-items-center justify-content-center"><svg width="8" height="8"><path d="M1 1 L7 7 M7 1 L1 7" stroke="#000" stroke-width="1.8"/></svg></div>
        </div>
        <div class="ms-left-box d-flex flex-column">
          <div class="ms-left-tools d-flex align-items-center">
            <svg><use href="#i-doc"/></svg>
            <svg><use href="#i-open"/></svg>
            <svg><use href="#i-save"/></svg>
            <svg><use href="#i-prop"/></svg>
            <svg><use href="#i-tview"/></svg>
          </div>
          <div class="ms-tree">
            <div class="ms-tree-row d-flex align-items-center">0_anal_nasob_1</div>
            <div class="ms-tree-row d-flex align-items-center">
              <svg width="11" height="17" viewBox="0 0 11 17" class="ms-tree-doc"><path d="M1.5 3 L5 .5 H9.5 V15.5 H1.5 Z" fill="#fff" stroke="#000"/><path d="M.5 5 H2 V12 H.5" fill="none" stroke="#e00000" stroke-width="1.4"/></svg>
              <span class="ms-tree-sel d-flex align-items-center">10_anal_nasob_1</span>
            </div>
            <div class="ms-tree-row ms-tree-child d-flex align-items-center"><svg><use href="#i-hb"/></svg>ln(X5)</div>
            <div class="ms-tree-row ms-tree-child d-flex align-items-center"><svg><use href="#i-hb"/></svg>exp(X2)</div>
            <div class="ms-tree-row ms-tree-child d-flex align-items-center"><svg><use href="#i-hb"/></svg>SUMA(X3)</div>
            <div class="ms-tree-row ms-tree-child d-flex align-items-center"><svg><use href="#i-hb"/></svg>ln(X1)</div>
            <div class="ms-tree-row ms-tree-child d-flex align-items-center"><svg><use href="#i-hb"/></svg>minus_jedna_polovina(X</div>
            <div class="ms-tree-dots"></div>
          </div>
          <div class="ms-hbar d-flex align-items-center">
            <span class="ms-sarrow d-flex align-items-center justify-content-center"><span class="ms-tri-l"></span></span>
            <div class="ms-hthumb th-left d-flex align-items-center justify-content-center">III</div>
            <span class="ms-sarrow d-flex align-items-center justify-content-center ms-auto"><span class="ms-tri-r"></span></span>
          </div>
        </div>
        <div class="ms-ltabs d-flex">
          <div class="ms-ltab">Hierarchy</div>
          <div class="ms-ltab tab-on">Visibility</div>
          <div class="ms-ltab tab-cut">Proje</div>
          <div class="ms-larrows d-flex">
            <span class="d-flex align-items-center justify-content-center"><span class="ms-tri-l"></span></span>
            <span class="d-flex align-items-center justify-content-center"><span class="ms-tri-r"></span></span>
          </div>
        </div>
      </div>
      <div class="ms-sash"></div>
      <div class="ms-center d-flex flex-column">
        <div class="ms-canvas-frame">
          <div class="ms-canvas-in d-flex flex-column">
            <div class="d-flex flex-grow-1 ms-canvas-body">
              <div class="ms-sheet">
                <svg width="903" height="614" viewBox="197 117 903 614">
                  <g fill="none" stroke="#000" stroke-width="1.3">
                    <rect x="292.5" y="208.5" width="80" height="53"/>
                    <rect x="292.5" y="397.5" width="80" height="53"/>
                    <rect x="481.5" y="316.5" width="80" height="53"/>
                    <rect x="625.5" y="316.5" width="80" height="53"/>
                    <rect x="760.5" y="316.5" width="80" height="53"/>
                    <rect x="904.5" y="325.5" width="45" height="54"/>
                    <circle cx="220" cy="271" r="17.5" stroke-width="1"/>
                    <circle cx="220" cy="468" r="17.5" stroke-width="1"/>
                    <!-- black wire stubs -->
                    <path d="M220 244 V298 M220 325 V334 M275 235 H292 M372 235 H392 M464 334 H481 M464 352 H481"/>
                    <path d="M220 442 V496 M220 514 V523 M275 424 H292 M372 424 H392 M418 469 V478 M418 515 V523 M418 533 V541"/>
                    <path d="M526 209 V217 M526 254 V263 M526 272 V280"/>
                    <path d="M562 343 H581 M608 343 H625 M706 343 H725 M743 343 H760 M841 343 H859 M886 343 H904 M886 361 H904 M950 352 H968"/>
                    <path d="M589 425 V433 M589 470 V478 M589 533 V541 M733 425 V433 M733 470 V478 M733 533 V541"/>
                    <path d="M859 434 V442 M859 479 V487 M859 533 V541 M1012 389 V397 M1012 434 V442 M1012 533 V541"/>
                  </g>
                  <g fill="none" stroke="#000" stroke-width="2">
                    <path d="M211 334 H230 M211 523 H230 M409 541 H428 M517 280 H536 M581 541 H599 M724 541 H743 M850 541 H869 M1003 541 H1022"/>
                  </g>
                  <g fill="none" stroke="#f00" stroke-width="2">
                    <path d="M220 244 V235 H275 M220 298 V325 M392 235 H418 M526 209 V199 H418 V334 H464 M464 352 H418 V469"/>
                    <path d="M220 442 V424 H275 M220 496 V514 M392 424 H418 M418 523 V533"/>
                    <path d="M526 263 V272 M581 343 H608 M589 343 V425 M589 478 V533 M725 343 H743 M733 343 V425 M733 478 V533"/>
                    <path d="M859 343 H886 M877 343 V361 M859 361 H886 M859 361 V434 M859 487 V533 M968 352 H1012 V389 M1012 442 V533"/>
                  </g>
                  <g fill="#f00">
                    <rect x="416" y="233" width="4" height="4"/><rect x="416" y="422" width="4" height="4"/>
                    <rect x="587" y="341" width="4" height="4"/><rect x="731" y="341" width="4" height="4"/>
                    <rect x="875" y="341" width="4" height="4"/><rect x="875" y="359" width="4" height="4"/>
                  </g>

                  <text class="sch-txt" x="217" y="171" font-size="26.6" font-weight="700" fill="#111">Analogová násobička jednokvadrantová</text>
                  <text class="sch-txt sch-thick" x="585" y="305" font-size="13.33">minus_jedna_polovina</text>
                  <text class="sch-txt sch-thick" x="788" y="303" font-size="13.33">exp</text>
                  <text class="sch-txt sch-thick" x="884" y="310" font-size="15">x_na_druhou</text>
                  <text class="sch-txt sch-thick" x="324" y="276" font-size="13.33">ln</text>
                  <text class="sch-txt sch-thick" x="324" y="465" font-size="13.33">ln</text>
                  <text class="sch-txt sch-thick" x="506" y="384" font-size="13.33">SUMA</text>

                  <g class="sch-io">
                    <text x="327" y="205">X5</text><text x="327" y="394">X1</text>
                    <text x="516" y="313">X3</text><text x="660" y="385">X4</text><text x="792" y="381">X2</text>
                    <text x="298" y="238">IO1</text><text x="352" y="238">IO2</text>
                    <text x="298" y="428">IO1</text><text x="352" y="428">IO2</text>
                    <text x="488" y="338">IO1</text><text x="488" y="356">IO2</text><text x="542" y="347">IO3</text>
                    <text x="632" y="347">IO1</text><text x="686" y="347">IO2</text>
                    <text x="767" y="347">IO1</text><text x="821" y="347">IO2</text>
                    <text x="907" y="347">X</text><text x="907" y="365">Y</text>
                    <text x="922" y="358">K'XY</text>
                  </g>
                  <text class="sch-lbl" x="905.5" y="390" font-size="10">1 V/V 0 V</text>

                  <g font-family="Liberation Sans, sans-serif" font-size="10"><text x="238" y="263">+</text><text x="238" y="286">-</text><text x="238" y="460">+</text><text x="238" y="485">-</text></g>
                  <text class="sch-txt sch-thick" x="246" y="286" font-size="25">U11</text>
                  <text class="sch-txt sch-thick" x="246" y="483" font-size="25">U12</text>
                  <text class="sch-txt sch-thick" x="1058" y="429" font-size="25">U2</text>
                  <text class="sch-lbl" x="238" y="311" font-size="18">-6 V</text>
                  <text class="sch-lbl" x="238" y="509" font-size="18">-2.5 V</text>

                  <g>
                    <rect x="490" y="217" width="81" height="37" fill="#808080"/><rect x="505" y="226" width="53" height="19" fill="#000"/>
                    <text class="sch-read" x="509" y="240">0.701</text><text class="sch-sign" x="494" y="229">+</text><text class="sch-sign" x="495" y="250">-</text><text class="sch-volt" x="559" y="240">V</text>
                    <text class="sch-un" x="573" y="235">U4</text><text class="sch-dc" x="537" y="275">DC  10MOhm</text>
                  </g>
                  <g>
                    <rect x="382" y="478" width="81" height="37" fill="#808080"/><rect x="397" y="487" width="53" height="19" fill="#000"/>
                    <text class="sch-read" x="401" y="501">0.679</text><text class="sch-sign" x="386" y="490">+</text><text class="sch-sign" x="387" y="511">-</text><text class="sch-volt" x="451" y="501">V</text>
                    <text class="sch-un" x="465" y="496">U5</text><text class="sch-dc" x="429" y="536">DC  10MOhm</text>
                  </g>
                  <g>
                    <rect x="553" y="433" width="81" height="37" fill="#808080"/><rect x="568" y="442" width="53" height="19" fill="#000"/>
                    <text class="sch-read" x="572" y="456">-1.380</text><text class="sch-sign" x="557" y="445">+</text><text class="sch-sign" x="558" y="466">-</text><text class="sch-volt" x="622" y="456">V</text>
                    <text class="sch-un" x="636" y="451">U1</text><text class="sch-dc" x="600" y="491">DC  10MOhm</text>
                  </g>
                  <g>
                    <rect x="697" y="433" width="81" height="37" fill="#808080"/><rect x="712" y="442" width="53" height="19" fill="#000"/>
                    <text class="sch-read" x="716" y="456">0.690</text><text class="sch-sign" x="701" y="445">+</text><text class="sch-sign" x="702" y="466">-</text><text class="sch-volt" x="766" y="456">V</text>
                    <text class="sch-un" x="780" y="451">U3</text><text class="sch-dc" x="744" y="491">DC  10MOhm</text>
                  </g>
                  <g>
                    <rect x="823" y="442" width="81" height="37" fill="#808080"/><rect x="838" y="451" width="53" height="19" fill="#000"/>
                    <text class="sch-read" x="842" y="465">-3.868</text><text class="sch-sign" x="827" y="454">+</text><text class="sch-sign" x="828" y="475">-</text><text class="sch-volt" x="892" y="465">V</text>
                    <text class="sch-un" x="906" y="460">U6</text><text class="sch-dc" x="870" y="500">DC  10MOhm</text>
                  </g>
                  <g>
                    <rect x="976" y="397" width="81" height="37" fill="#808080"/><rect x="991" y="406" width="53" height="19" fill="#000"/>
                    <text class="sch-read" x="995" y="420">14.960</text><text class="sch-sign" x="980" y="409">+</text><text class="sch-sign" x="981" y="430">-</text><text class="sch-volt" x="1045" y="420">V</text>
                    <text class="sch-dc" x="1023" y="455">DC  10MOhm</text>
                  </g>
                </svg>
              </div>
              <div class="ms-vbar d-flex flex-column">
                <span class="ms-sarrow d-flex align-items-center justify-content-center"><span class="ms-tri-u"></span></span>
                <div class="ms-vthumb d-flex align-items-center justify-content-center"><span class="ms-grip-v"></span></div>
                <span class="ms-sarrow d-flex align-items-center justify-content-center mt-auto"><span class="ms-tri-d"></span></span>
              </div>
            </div>
            <div class="ms-hbar d-flex align-items-center">
              <span class="ms-sarrow d-flex align-items-center justify-content-center"><span class="ms-tri-l"></span></span>
              <div class="ms-hthumb th-main d-flex align-items-center justify-content-center">III</div>
              <span class="ms-sarrow sa-end d-flex align-items-center justify-content-center"><span class="ms-tri-r"></span></span>
            </div>
          </div>
        </div>
        <div class="ms-dtabs d-flex align-items-start">
          <div class="ms-dtab d-flex align-items-center"><svg><use href="#i-sch"/></svg>10_anal_nasob_1 *</div>
          <div class="d-flex ms-auto ms-darrs">
            <span class="ms-darr d-flex align-items-center justify-content-center"><span class="ms-navy-l"></span></span>
            <span class="ms-darr d-flex align-items-center justify-content-center"><span class="ms-navy-r"></span></span>
          </div>
        </div>
      </div>
      <div class="ms-right d-flex flex-column align-items-center">
        <div class="ms-inst d-flex align-items-center"><svg><use href="#r-dmm"/></svg></div>
        <div class="ms-inst d-flex align-items-center"><svg><use href="#r-fg"/></svg></div>
        <div class="ms-inst d-flex align-items-center"><svg><use href="#r-watt"/></svg></div>
        <div class="ms-inst d-flex align-items-center"><svg><use href="#r-sc2"/></svg></div>
        <div class="ms-inst d-flex align-items-center"><svg><use href="#r-sc4"/></svg></div>
        <div class="ms-inst d-flex align-items-center"><svg><use href="#r-bode"/></svg></div>
        <div class="ms-inst d-flex align-items-center"><svg><use href="#r-cnt"/></svg></div>
        <div class="ms-inst d-flex align-items-center"><svg><use href="#r-word"/></svg></div>
        <div class="ms-inst d-flex align-items-center"><svg><use href="#r-logic"/></svg></div>
        <div class="ms-inst d-flex align-items-center"><svg><use href="#r-conv"/></svg></div>
        <div class="ms-inst d-flex align-items-center"><svg><use href="#r-iv"/></svg></div>
        <div class="ms-inst d-flex align-items-center"><svg><use href="#r-dist"/></svg></div>
        <div class="ms-inst d-flex align-items-center"><svg><use href="#r-spec"/></svg></div>
        <div class="ms-inst d-flex align-items-center"><svg><use href="#r-net"/></svg></div>
        <div class="ms-inst d-flex align-items-center"><svg><use href="#r-agf"/></svg></div>
        <div class="ms-inst d-flex align-items-center"><svg><use href="#r-agm"/></svg></div>
        <div class="ms-inst d-flex align-items-center"><svg><use href="#r-ags"/></svg></div>
        <div class="ms-inst d-flex align-items-center"><svg><use href="#r-tek"/></svg></div>
        <div class="ms-rsep rs-a"></div>
        <svg width="17" height="13" viewBox="0 0 17 13"><path d="M.5 .5 H4 L7 3 H16 V12 H.5 Z" fill="#ffff40" stroke="#888"/><text x="1.5" y="11" font-family="Liberation Sans" font-weight="700" font-size="7">1.4v</text></svg>
        <span class="ms-tiny-arr ta-a"></span>
        <svg width="17" height="14" viewBox="0 0 17 14"><path d="M3 .5 H14 V13.5 H3 Z" fill="#003a3a"/><path d="M6 3 L12 7 L6 11 Z" fill="#ffff40" stroke="#000"/><path d="M0 5 H5" stroke="#00f"/><path d="M0 9 H5 M12 7 H17" stroke="#f00"/></svg>
        <span class="ms-tiny-arr ta-b"></span>
        <div class="ms-rsep rs-b"></div>
        <svg width="16" height="12" viewBox="0 0 16 12"><path d="M1 6 L9 1 L15 5 L7 11 Z" fill="#f4f4f4" stroke="#999"/><path d="M3 6 L7 9 M8 2 L12 5" stroke="#007050" stroke-width="1.6"/></svg>
        <div class="ms-rsep rs-c"></div>
        <svg width="17" height="16" viewBox="0 0 17 16"><ellipse cx="6" cy="10" rx="4.5" ry="4.5" fill="none" stroke="#8a1020" stroke-width="2.6"/><path d="M8 8 L15 1 M9 11 L16 5 M11 6 L14 9" stroke="#000" stroke-width="1.4"/></svg>
      </div>
    </div>

    <div class="ms-status d-flex align-items-center">
      <span class="st-a">-</span>
      <span class="st-b">-</span>
      <div class="d-flex ms-auto ms-stat-segs"><span class="ms-stat-seg"></span><span class="ms-stat-seg"></span><span class="ms-stat-seg"></span><span class="ms-stat-seg"></span><span class="ms-stat-seg"></span></div>
      <svg class="ms-stat-grip" width="15" height="15" viewBox="0 0 15 15"><path d="M12 3 H14 V5 H12 Z M9 6 H11 V8 H9 Z M12 6 H14 V8 H12 Z M6 9 H8 V11 H6 Z M9 9 H11 V11 H9 Z M12 9 H14 V11 H12 Z M3 12 H5 V14 H3 Z M6 12 H8 V14 H6 Z M9 12 H11 V14 H9 Z M12 12 H14 V14 H12 Z" fill="#c4c4c4"/></svg>
    </div>
  </div>
</div>

<script src="https://cdn.jsdelivr.net/npm/bootstrap@5.3.0/dist/js/bootstrap.bundle.min.js"></script>
</body>
</html>
